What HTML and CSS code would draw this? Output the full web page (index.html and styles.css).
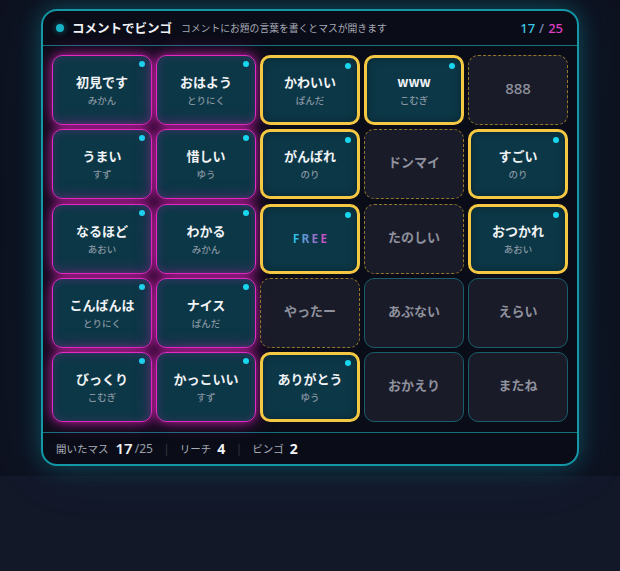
FILE: index.html
```html
<!DOCTYPE html>
<html lang="ja">
<head>
<meta charset="utf-8">
<title>コメントでビンゴ</title>
<link rel="stylesheet" href="styles.css">
</head>
<body>
<div class="stage">
  <section class="panel">
    <header class="head">
      <span class="head-dot"></span>
      <h1 class="title">コメントでビンゴ</h1>
      <p class="subtitle">コメントにお題の言葉を書くとマスが開きます</p>
      <div class="count"><span class="c-open">17</span><span class="c-sep">/</span><span class="c-total">25</span></div>
    </header>
    <div class="grid">
      <div class="cell bingo"><span class="dot"></span><b class="word">初見です</b><span class="who">みかん</span></div>
      <div class="cell bingo"><span class="dot"></span><b class="word">おはよう</b><span class="who">とりにく</span></div>
      <div class="cell reach"><span class="dot"></span><b class="word">かわいい</b><span class="who">ぱんだ</span></div>
      <div class="cell reach"><span class="dot"></span><b class="word">www</b><span class="who">こむぎ</span></div>
      <div class="cell wait"><span class="word num">888</span></div>

      <div class="cell bingo"><span class="dot"></span><b class="word">うまい</b><span class="who">すず</span></div>
      <div class="cell bingo"><span class="dot"></span><b class="word">惜しい</b><span class="who">ゆう</span></div>
      <div class="cell reach"><span class="dot"></span><b class="word">がんばれ</b><span class="who">のり</span></div>
      <div class="cell wait"><span class="word">ドンマイ</span></div>
      <div class="cell reach"><span class="dot"></span><b class="word">すごい</b><span class="who">のり</span></div>

      <div class="cell bingo"><span class="dot"></span><b class="word">なるほど</b><span class="who">あおい</span></div>
      <div class="cell bingo"><span class="dot"></span><b class="word">わかる</b><span class="who">みかん</span></div>
      <div class="cell reach"><span class="dot"></span><b class="free">FREE</b></div>
      <div class="cell wait"><span class="word">たのしい</span></div>
      <div class="cell reach"><span class="dot"></span><b class="word">おつかれ</b><span class="who">あおい</span></div>

      <div class="cell bingo"><span class="dot"></span><b class="word">こんばんは</b><span class="who">とりにく</span></div>
      <div class="cell bingo"><span class="dot"></span><b class="word">ナイス</b><span class="who">ぱんだ</span></div>
      <div class="cell wait"><span class="word">やったー</span></div>
      <div class="cell empty"><span class="word">あぶない</span></div>
      <div class="cell empty"><span class="word">えらい</span></div>

      <div class="cell bingo"><span class="dot"></span><b class="word">びっくり</b><span class="who">こむぎ</span></div>
      <div class="cell bingo"><span class="dot"></span><b class="word">かっこいい</b><span class="who">すず</span></div>
      <div class="cell reach"><span class="dot"></span><b class="word">ありがとう</b><span class="who">ゆう</span></div>
      <div class="cell empty"><span class="word">おかえり</span></div>
      <div class="cell empty"><span class="word">またね</span></div>
    </div>
    <footer class="foot">
      <span class="f-label">開いたマス</span>
      <span class="f-big">17</span><span class="f-small">/25</span>
      <span class="f-bar">|</span>
      <span class="f-label">リーチ</span>
      <span class="f-num">4</span>
      <span class="f-bar">|</span>
      <span class="f-label">ビンゴ</span>
      <span class="f-num">2</span>
    </footer>
  </section>
</div>
</body>
</html>
```

FILE: styles.css
```css
* { box-sizing: border-box; }

html, body {
  margin: 0;
  padding: 0;
}

body {
  background: #131829;
  font-family: "Noto Sans", "Noto Sans CJK JP", sans-serif;
  color: #eef0f5;
  min-height: 571px;
}

.stage {
  height: 476px;
  padding: 9px 41px 0;
  background: radial-gradient(ellipse at 50% 45%, #0f1826 0%, #0d111e 60%, #0e1220 100%);
}

.panel {
  width: 538px;
  height: 457px;
  border: 2px solid #1497a6;
  border-radius: 16px;
  background: #0a0c17;
  box-shadow: 0 0 22px rgba(20, 170, 190, 0.35), 0 0 60px rgba(20, 140, 170, 0.12);
  display: flex;
  flex-direction: column;
  overflow: hidden;
}

.head {
  height: 35px;
  border-bottom: 1px solid #16707e;
  display: flex;
  align-items: center;
  padding: 0 14px 1px 13px;
}

.head-dot {
  width: 8px;
  height: 8px;
  border-radius: 50%;
  background: #17b3c4;
  box-shadow: 0 0 6px rgba(23, 179, 196, 0.6);
  margin-right: 8px;
  flex: none;
}

.title {
  margin: 0;
  font-size: 12.5px;
  font-weight: 700;
  line-height: 18px;
  color: #f0f2f6;
  font-family: "Noto Sans CJK JP", sans-serif;
}

.subtitle {
  margin: 0 0 0 9px;
  font-size: 9.8px;
  line-height: 16px;
  color: #a5a9b6;
  font-family: "Noto Sans CJK JP", sans-serif;
  flex: 1;
}

.count {
  font-size: 13px;
  font-weight: 500;
  display: flex;
  gap: 4px;
  font-family: "Noto Sans", sans-serif;
}
.c-open { color: #3cc7e4; }
.c-sep { color: #7d88b8; }
.c-total { color: #df3fc3; }

.grid {
  display: grid;
  grid-template-columns: repeat(5, 100px);
  grid-template-rows: repeat(5, 70px);
  gap: 4.3px 4px;
  padding: 9px 9px 9px 9px;
}

.cell {
  position: relative;
  border-radius: 10px;
  display: flex;
  flex-direction: column;
  align-items: center;
  justify-content: center;
  gap: 4px;
  font-family: "Noto Sans CJK JP", sans-serif;
}

.dot {
  position: absolute;
  top: 5px;
  right: 6px;
  width: 6px;
  height: 6px;
  border-radius: 50%;
  background: #19d6ef;
}

.word {
  font-size: 13px;
  line-height: 16px;
  font-weight: 700;
  color: #f1f3f6;
}

.who {
  font-size: 9.5px;
  line-height: 12px;
  color: #8594a0;
  font-weight: 500;
}

.bingo {
  background: rgba(13, 66, 82, 0.8);
  border: 1.6px solid #e52ac4;
  box-shadow: 0 0 8px rgba(230, 40, 190, 0.6), 0 0 20px rgba(200, 30, 170, 0.55), inset 0 0 10px rgba(210, 50, 190, 0.2);
}

.reach {
  background: rgba(13, 66, 82, 0.8);
  border: 3px solid #f4c842;
  box-shadow: inset 0 0 8px rgba(0, 0, 0, 0.3);
}

.wait {
  background: rgba(28, 30, 44, 0.85);
  border: 1px dashed #94762c;
  padding-bottom: 4px;
}

.empty {
  background: rgba(28, 30, 44, 0.85);
  border: 1px solid #1a5d6b;
  padding-bottom: 4px;
}

.wait .word, .empty .word {
  color: #8f919d;
  font-weight: 600;
}

.wait .num {
  font-family: "Noto Sans", sans-serif;
  font-size: 15px;
  font-weight: 500;
}

.free {
  font-family: "Noto Sans", sans-serif;
  font-size: 12px;
  font-weight: 700;
  letter-spacing: 2.2px;
  margin-right: -2px;
  background: linear-gradient(90deg, #22c6ea 0%, #8a7ad0 55%, #e23fc2 100%);
  -webkit-background-clip: text;
  background-clip: text;
  color: transparent;
}

.foot {
  margin-top: auto;
  height: 32px;
  border-top: 1px solid #16707e;
  display: flex;
  align-items: center;
  padding: 0 0 1px 13px;
  font-family: "Noto Sans CJK JP", sans-serif;
}

.f-label {
  font-size: 10.5px;
  color: #a9adb9;
}

.f-big {
  font-family: "Noto Sans", sans-serif;
  font-size: 15px;
  font-weight: 600;
  color: #f2f4f7;
  margin-left: 7px;
}

.f-small {
  font-family: "Noto Sans", sans-serif;
  font-size: 12px;
  color: #9a9eab;
  margin-left: 2px;
}

.f-bar {
  font-size: 11px;
  color: #3d4050;
  margin: 0 12px;
}

.f-num {
  font-family: "Noto Sans", sans-serif;
  font-size: 14px;
  font-weight: 700;
  color: #f2f4f7;
  margin-left: 6px;
}
```
